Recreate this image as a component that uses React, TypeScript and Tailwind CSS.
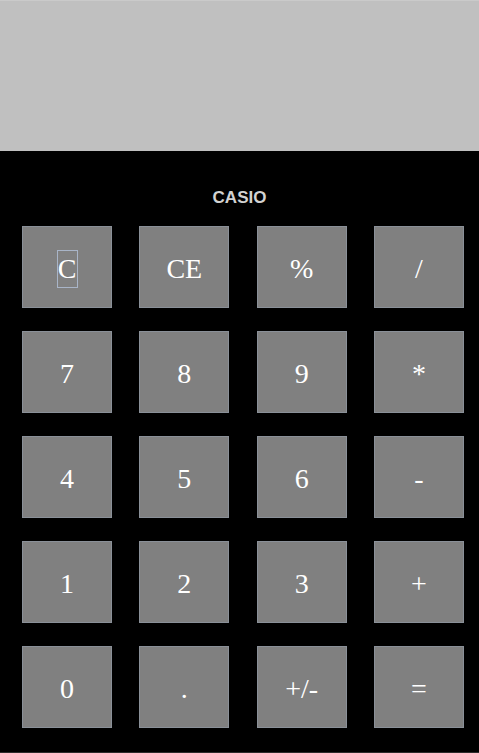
import React from "react";

const keys = [
  "C", "CE", "%", "/",
  "7", "8", "9", "*",
  "4", "5", "6", "-",
  "1", "2", "3", "+",
  "0", ".", "+/-", "=",
];

export default function App() {
  return (
    <div className="w-[479px] h-[753px] flex flex-col bg-black">
      <div className="h-[151px] bg-[#c0c0c0] border-t border-[#cacaca]" />
      <div className="flex-1 flex flex-col bg-black border-b border-[#2c2c2c]">
        <div
          className="pt-[37px] h-[75px] text-center text-[17px] leading-[20px] font-bold text-[#d2d2d2]"
          style={{ fontFamily: '"Liberation Sans", Arial, sans-serif' }}
        >
          CASIO
        </div>
        <div className="ml-[22px] w-[442px] grid grid-cols-[90px_90px_90px_90px] justify-between gap-y-[23px]">
          {keys.map((k) => (
            <button
              key={k}
              className="h-[82px] w-[90px] pt-[4px] bg-[#808080] border border-[#8a9098] text-white text-[28px] flex items-center justify-center"
              style={{ fontFamily: '"Liberation Serif", "Times New Roman", serif' }}
            >
              {k === "C" ? (
                <span className="w-[21px] h-[38px] border border-[#a9b5c8] flex items-center justify-center">
                  C
                </span>
              ) : (
                k
              )}
            </button>
          ))}
        </div>
      </div>
    </div>
  );
}
